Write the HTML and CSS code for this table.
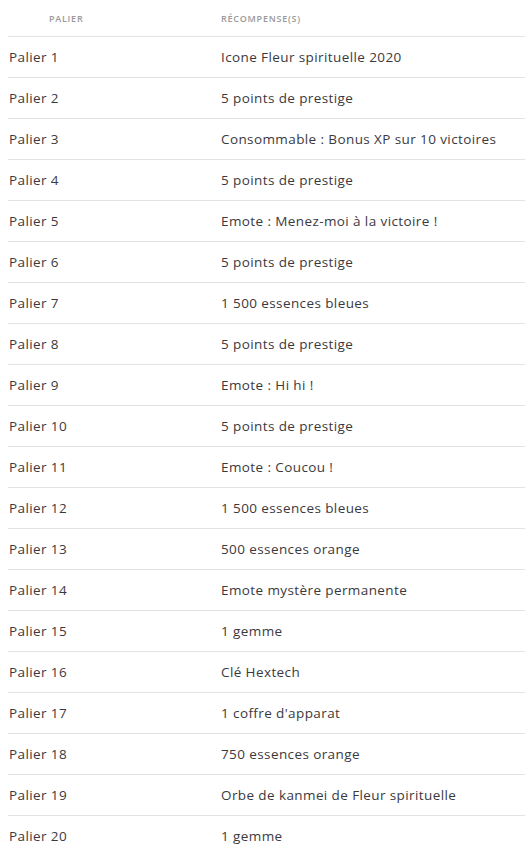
FILE: index.html
```html
<!DOCTYPE html>
<html lang="fr">
<head>
<meta charset="utf-8">
<link rel="stylesheet" href="styles.css">
</head>
<body>
<table class="tiers">
  <colgroup><col class="col1"><col class="col2"></colgroup>
  <thead>
    <tr><th class="c1">Palier</th><th class="c2">Récompense(s)</th></tr>
  </thead>
  <tbody>
    <tr><td class="c1">Palier 1</td><td class="c2">Icone Fleur spirituelle 2020</td></tr>
    <tr><td class="c1">Palier 2</td><td class="c2">5 points de prestige</td></tr>
    <tr><td class="c1">Palier 3</td><td class="c2">Consommable : Bonus XP sur 10 victoires</td></tr>
    <tr><td class="c1">Palier 4</td><td class="c2">5 points de prestige</td></tr>
    <tr><td class="c1">Palier 5</td><td class="c2">Emote : Menez-moi à la victoire !</td></tr>
    <tr><td class="c1">Palier 6</td><td class="c2">5 points de prestige</td></tr>
    <tr><td class="c1">Palier 7</td><td class="c2">1 500 essences bleues</td></tr>
    <tr><td class="c1">Palier 8</td><td class="c2">5 points de prestige</td></tr>
    <tr><td class="c1">Palier 9</td><td class="c2">Emote : Hi hi !</td></tr>
    <tr><td class="c1">Palier 10</td><td class="c2">5 points de prestige</td></tr>
    <tr><td class="c1">Palier 11</td><td class="c2">Emote : Coucou !</td></tr>
    <tr><td class="c1">Palier 12</td><td class="c2">1 500 essences bleues</td></tr>
    <tr><td class="c1">Palier 13</td><td class="c2">500 essences orange</td></tr>
    <tr><td class="c1">Palier 14</td><td class="c2">Emote mystère permanente</td></tr>
    <tr><td class="c1">Palier 15</td><td class="c2">1 gemme</td></tr>
    <tr><td class="c1">Palier 16</td><td class="c2">Clé Hextech</td></tr>
    <tr><td class="c1">Palier 17</td><td class="c2">1 coffre d'apparat</td></tr>
    <tr><td class="c1">Palier 18</td><td class="c2">750 essences orange</td></tr>
    <tr><td class="c1">Palier 19</td><td class="c2">Orbe de kanmei de Fleur spirituelle</td></tr>
    <tr><td class="c1">Palier 20</td><td class="c2">1 gemme</td></tr>
  </tbody>
</table>
</body>
</html>
```
FILE: styles.css
```css
html, body {
  margin: 0;
  padding: 0;
  background: #ffffff;
}
body {
  padding-left: 8px;
  font-family: "Open Sans", "Liberation Sans", sans-serif;
  color: #3b3940;
  overflow: hidden;
}
.tiers {
  border-collapse: collapse;
  width: 517px;
  table-layout: fixed;
}
.tiers .col1 {
  width: 213px;
}
.tiers th {
  height: 36px;
  padding: 0;
  text-align: left;
  vertical-align: middle;
  font-size: 9px;
  font-weight: 600;
  letter-spacing: 0.75px;
  text-transform: uppercase;
  color: #9a9a9a;
}
.tiers th.c1 {
  padding-left: 41px;
}
.tiers td {
  height: 40px;
  padding: 0;
  border-top: 1px solid #e2e2e2;
  font-size: 13.5px;
  letter-spacing: 0.4px;
  vertical-align: middle;
  white-space: nowrap;
}
.tiers td.c1 {
  padding-left: 1px;
}
.tiers .c2 {
  padding-left: 0;
}
```
